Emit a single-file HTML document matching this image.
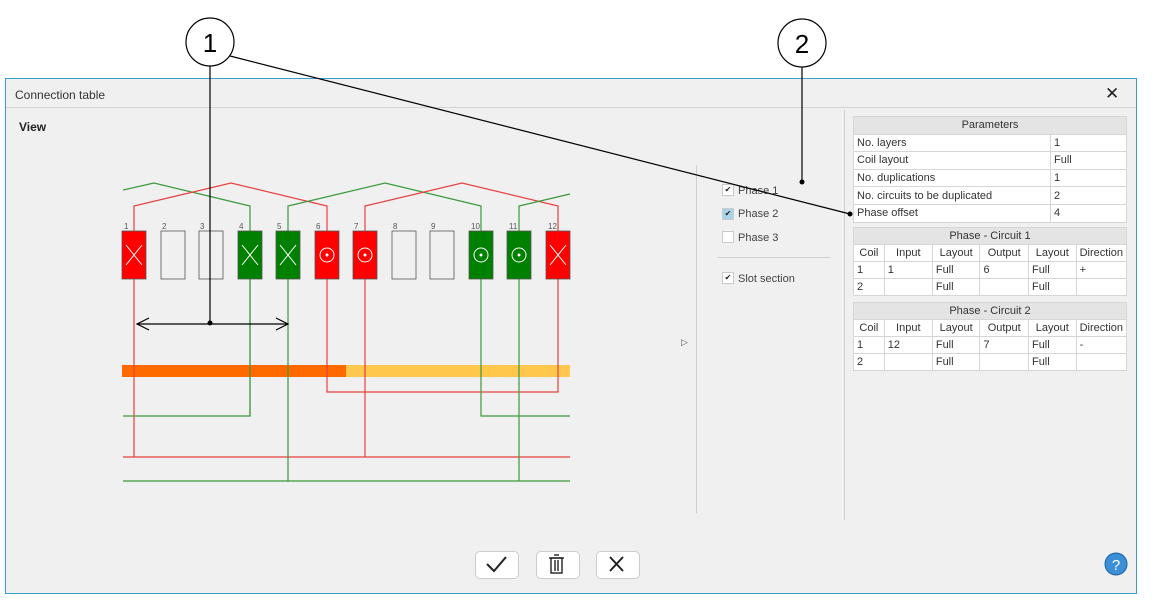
<!DOCTYPE html>
<html><head><meta charset="utf-8"><style>
body{margin:0;width:1153px;height:606px;background:#fff;position:relative;overflow:hidden;font-family:"Liberation Sans",Arial,sans-serif;font-size:12px;color:#222}
.dlg{position:absolute;left:5px;top:78px;width:1130px;height:514px;border:1px solid #3a9fc6;background:#f0f0f0}
.title{position:absolute;left:0;top:0;width:1130px;height:28px;border-bottom:1px solid #d4d4d4}
.title span{position:absolute;left:9px;top:9px;font-size:12px;color:#333}
table{position:absolute;border-collapse:collapse;font-size:11px;color:#333;background:#fff}
td{border:1px solid #d6d6d6;height:16px;padding:0 3px;white-space:nowrap}
table.p td{height:16.6px}
td.h{background:#e4e4e4;text-align:center}
.btn{position:absolute;top:551px;width:42px;height:26px;border:1px solid #ccc;border-radius:5px;background:#fff}
.cb{position:absolute;left:722px;width:10px;height:10px;border:1px solid #ccc;background:#fff;font-size:8px;line-height:10px;text-align:center}
.lab{position:absolute;left:738px;font-size:11px;color:#444}
</style></head><body>
<div class="dlg"><div class="title"><span>Connection table</span></div></div>
<div style="position:absolute;left:19px;top:120px;font-weight:bold;font-size:12px">View</div>
<div style="position:absolute;left:1105px;top:84px;font-size:17px">✕</div>
<div style="position:absolute;left:696px;top:165px;width:1px;height:348px;background:#cfcfcf"></div>
<div style="position:absolute;left:844px;top:110px;width:1px;height:410px;background:#cfcfcf"></div>
<div style="position:absolute;left:717px;top:257px;width:113px;height:1px;background:#d0d0d0"></div>
<div class="cb" style="top:184px">✔</div><div class="lab" style="top:185px">Phase 1</div>
<div class="cb" style="top:208px;background:#a8d4ea">✔</div><div class="lab" style="top:208px">Phase 2</div>
<div class="cb" style="top:231px"></div><div class="lab" style="top:232px">Phase 3</div>
<div class="cb" style="top:272px">✔</div><div class="lab" style="top:273px">Slot section</div>
<div style="position:absolute;left:681px;top:337px;font-size:9px;color:#555">▷</div>

<table class="p" style="left:853px;top:116px;width:274px">
<tr><td class="h" colspan="2">Parameters</td></tr>
<tr><td style="width:190px">No. layers</td><td>1</td></tr>
<tr><td>Coil layout</td><td>Full</td></tr>
<tr><td>No. duplications</td><td>1</td></tr>
<tr><td>No. circuits to be duplicated</td><td>2</td></tr>
<tr><td>Phase offset</td><td>4</td></tr>
</table>
<table style="left:853px;top:227px;width:274px">
<tr><td class="h" colspan="6">Phase - Circuit 1</td></tr>
<tr><td style="width:24px;text-align:center">Coil</td><td style="width:42px;text-align:center">Input</td><td style="width:41px;text-align:center">Layout</td><td style="width:42px;text-align:center">Output</td><td style="width:41px;text-align:center">Layout</td><td style="text-align:center">Direction</td></tr>
<tr><td>1</td><td>1</td><td>Full</td><td>6</td><td>Full</td><td>+</td></tr>
<tr><td>2</td><td></td><td>Full</td><td></td><td>Full</td><td></td></tr>
</table>
<table style="left:853px;top:302px;width:274px">
<tr><td class="h" colspan="6">Phase - Circuit 2</td></tr>
<tr><td style="width:24px;text-align:center">Coil</td><td style="width:42px;text-align:center">Input</td><td style="width:41px;text-align:center">Layout</td><td style="width:42px;text-align:center">Output</td><td style="width:41px;text-align:center">Layout</td><td style="text-align:center">Direction</td></tr>
<tr><td>1</td><td>12</td><td>Full</td><td>7</td><td>Full</td><td>-</td></tr>
<tr><td>2</td><td></td><td>Full</td><td></td><td>Full</td><td></td></tr>
</table>

<div class="btn" style="left:475px"></div><div class="btn" style="left:536px"></div><div class="btn" style="left:596px"></div>

<svg width="1153" height="606" style="position:absolute;left:0;top:0" xmlns="http://www.w3.org/2000/svg">
<g fill="none" stroke-width="1.2">
<polyline stroke="#3a9a3a" points="123,190 154,183 250,206 250,416 123,416"/>
<polyline stroke="#e84040" points="134,231 134,206 231,183 327,206 327,231"/>
<polyline stroke="#3a9a3a" points="288,231 288,206 385,183 481,206 481,231"/>
<polyline stroke="#e84040" points="365,231 365,206 462,183 558,206 558,231"/>
<polyline stroke="#3a9a3a" points="519,231 519,206 570,194"/>
</g>
<rect x="122" y="365" width="224" height="12" fill="#ff6a00"/>
<rect x="346" y="365" width="224" height="12" fill="#ffc84c"/>
<g fill="none" stroke-width="1.2">
<polyline stroke="#e84040" points="134,279 134,457"/>
<line stroke="#e84040" x1="123" y1="457" x2="570" y2="457"/>
<polyline stroke="#e84040" points="365,279 365,457"/>
<polyline stroke="#e84040" points="327,279 327,392 558,392 558,279"/>
<polyline stroke="#3a9a3a" points="250,279 250,416"/>
<polyline stroke="#3a9a3a" points="481,279 481,416 570,416"/>
<polyline stroke="#3a9a3a" points="288,279 288,481"/>
<line stroke="#3a9a3a" x1="123" y1="481" x2="570" y2="481"/>
<polyline stroke="#3a9a3a" points="519,279 519,481"/>
</g>
<g font-size="8" fill="#555" font-family="Liberation Sans">
<text x="124" y="229">1</text><text x="162" y="229">2</text><text x="200" y="229">3</text><text x="239" y="229">4</text><text x="277" y="229">5</text><text x="316" y="229">6</text><text x="354" y="229">7</text><text x="393" y="229">8</text><text x="431" y="229">9</text><text x="471" y="229">10</text><text x="509" y="229">11</text><text x="548" y="229">12</text>
</g>
<g stroke="#555" stroke-width="0.8">
<rect x="122" y="231" width="24" height="48" fill="#ff0000"/>
<rect x="161" y="231" width="24" height="48" fill="none"/>
<rect x="199" y="231" width="24" height="48" fill="none"/>
<rect x="238" y="231" width="24" height="48" fill="#008000"/>
<rect x="276" y="231" width="24" height="48" fill="#008000"/>
<rect x="315" y="231" width="24" height="48" fill="#ff0000"/>
<rect x="353" y="231" width="24" height="48" fill="#ff0000"/>
<rect x="392" y="231" width="24" height="48" fill="none"/>
<rect x="430" y="231" width="24" height="48" fill="none"/>
<rect x="469" y="231" width="24" height="48" fill="#008000"/>
<rect x="507" y="231" width="24" height="48" fill="#008000"/>
<rect x="546" y="231" width="24" height="48" fill="#ff0000"/>
</g>
<g stroke="#fff" stroke-width="1" fill="none">
<path d="M126,245 L142,265 M142,245 L126,265"/>
<path d="M242,245 L258,265 M258,245 L242,265"/>
<path d="M280,245 L296,265 M296,245 L280,265"/>
<path d="M550,245 L566,265 M566,245 L550,265"/>
<circle cx="327" cy="255" r="7"/><circle cx="365" cy="255" r="7"/><circle cx="481" cy="255" r="7"/><circle cx="519" cy="255" r="7"/>
</g>
<g fill="#fff"><circle cx="327" cy="255" r="1.5"/><circle cx="365" cy="255" r="1.5"/><circle cx="481" cy="255" r="1.5"/><circle cx="519" cy="255" r="1.5"/></g>
<g stroke="#000" stroke-width="1.2" fill="none">
<line x1="137" y1="324" x2="288" y2="324"/>
<polyline points="149,318 137,324 149,330"/>
<polyline points="276,318 288,324 276,330"/>
<circle cx="210" cy="42" r="24" fill="#fff"/>
<line x1="210" y1="66" x2="210" y2="324"/>
<line x1="230" y1="56" x2="850" y2="214"/>
<circle cx="802" cy="43" r="24" fill="#fff"/>
<line x1="802" y1="67" x2="802" y2="182"/>
</g>
<g fill="#000"><circle cx="210" cy="323" r="2.5"/><circle cx="850" cy="214" r="2.5"/><circle cx="802" cy="182" r="2.5"/></g>
<text x="210" y="52" font-size="26" text-anchor="middle" font-family="Liberation Sans">1</text>
<text x="802" y="53" font-size="26" text-anchor="middle" font-family="Liberation Sans">2</text>
<polyline points="487,564 494,571 506,557" fill="none" stroke="#222" stroke-width="2"/>
<g stroke="#222" stroke-width="1.4" fill="none"><rect x="551" y="558" width="11" height="15"/><line x1="549" y1="558" x2="564" y2="558"/><line x1="554" y1="555" x2="559" y2="555"/><line x1="555" y1="560" x2="555" y2="571"/><line x1="558" y1="560" x2="558" y2="571"/></g>
<path d="M610,557 L623,571 M623,557 L610,571" stroke="#222" stroke-width="2"/>
<circle cx="1116" cy="564" r="11" fill="#3a8fd6" stroke="#1b5fa3"/>
<text x="1116" y="570" font-size="15" fill="#fff" text-anchor="middle" font-family="Liberation Sans">?</text>
</svg>
</body></html>
